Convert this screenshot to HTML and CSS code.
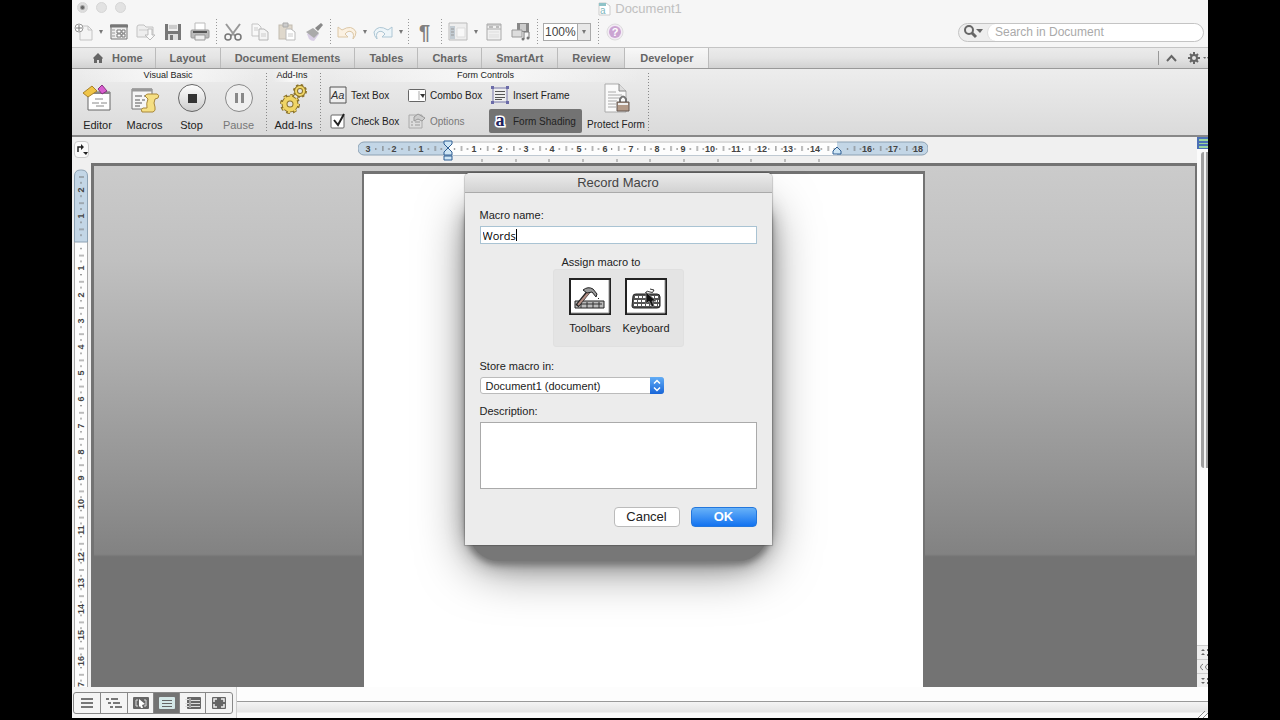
FILE: index.html
```html
<!DOCTYPE html>
<html lang="en">
<head>
    <meta charset="UTF-8">
    <meta name="viewport" content="width=device-width, initial-scale=1.0">
    <title>Document1</title>
    <link rel="stylesheet" href="styles.css">
</head>
<body>
<div class="window">
    <header class="titlebar">
        <div class="lights"><span class="light edited"></span><span class="light"></span><span class="light"></span></div>
        <h1 class="doc-title">
            <svg width="13" height="14" viewBox="0 0 13 14"><path d="M1 1h7l4 3v9H1z" fill="#fff" stroke="#ccc"/><path d="M1 1h7v3H1z" fill="#8fc3c8"/><text x="2" y="12" font-size="10" fill="#7fb6bd">a</text></svg>
            Document1
        </h1>
    </header>

    <!-- Standard toolbar -->
    <div class="toolbar">
        <button class="tool" aria-label="New"><svg width="20" height="20" viewBox="0 0 20 20"><path d="M6 4h8l4 4v10H6z" fill="#f4f4f4" stroke="#c4c4c4"/><path d="M14 4v4h4" fill="none" stroke="#c4c4c4"/><circle cx="5" cy="6" r="4" fill="#fff" stroke="#999"/><path d="M5 3v6M2 6h6" stroke="#777"/></svg></button>
        <button class="caret" aria-label="New options"></button>
        <button class="tool" aria-label="Gallery"><svg width="20" height="20" viewBox="0 0 20 20"><path d="M2 3h16v14H2z" fill="#eee" stroke="#777"/><path d="M1 4h18" stroke="#777" stroke-width="3"/><path d="M3 8h3M3 11h3M3 14h3" stroke="#999"/><path d="M8 8h4v3H8zM8 12h4v3H8zM13 8h3v3h-3zM13 12h3v3h-3z" fill="#fff" stroke="#777"/></svg></button>
        <button class="tool" aria-label="Open"><svg width="20" height="20" viewBox="0 0 20 20"><path d="M1 5q0-2 2-2h5l2 2h7v10H1z" fill="#eee" stroke="#c2c2c2"/><path d="M3 8h14" stroke="#ccc"/><path d="M12 7h4v6h3l-5 5-5-5h3z" fill="#fafafa" stroke="#bbb"/></svg></button>
        <button class="tool" aria-label="Save"><svg width="20" height="20" viewBox="0 0 20 20"><path d="M2 2h16v16H2z" fill="#777"/><path d="M5 2h10v7H5z" fill="#eee"/><path d="M6 4h8M6 6h8" stroke="#aaa"/><path d="M5 12h10v6H5z" fill="#ddd"/><path d="M7 13h3v5H7z" fill="#777"/></svg></button>
        <button class="tool" aria-label="Print"><svg width="20" height="20" viewBox="0 0 20 20"><path d="M5 1h10v8H5z" fill="#fff" stroke="#bbb"/><rect x="1" y="8" width="18" height="8" rx="1" fill="#bbb" stroke="#999"/><path d="M3 10h14" stroke="#555" stroke-width="2"/><path d="M5 13h10v5H5z" fill="#eee" stroke="#999"/></svg></button>
        <span class="sep"></span>
        <button class="tool" aria-label="Cut"><svg width="20" height="20" viewBox="0 0 20 20"><path d="M3 2l9 12M17 2L8 14" stroke="#999" stroke-width="2"/><circle cx="5" cy="15" r="3" fill="none" stroke="#777" stroke-width="1.5"/><circle cx="15" cy="15" r="3" fill="none" stroke="#777" stroke-width="1.5"/></svg></button>
        <button class="tool" aria-label="Copy"><svg width="20" height="20" viewBox="0 0 20 20"><path d="M2 2h6l3 3v9H2z" fill="#f8f8f8" stroke="#c4c4c4"/><path d="M9 7h5l4 3v8H9z" fill="#f4f4f4" stroke="#b5b5b5"/><path d="M4 6h4M4 8h4M11 12h5M11 14h5" stroke="#ccc"/></svg></button>
        <button class="tool" aria-label="Paste"><svg width="20" height="20" viewBox="0 0 20 20"><rect x="2" y="3" width="13" height="14" fill="#dfd8cc" stroke="#c2bbb0"/><path d="M6 1h5v4H6z" fill="#ccc" stroke="#aaa"/><path d="M9 7h5l4 3v8H9z" fill="#fff" stroke="#bbb"/><path d="M11 12h5M11 14h5" stroke="#ccc"/></svg></button>
        <button class="tool" aria-label="Format Painter"><svg width="20" height="20" viewBox="0 0 20 20"><path d="M3 12l7-5 5 5-5 7q-3 0-5-2z" fill="#d8cee4"/><path d="M2 10l7-4 6 5-5 5z" fill="#aaa"/><path d="M11 6l6-5 2 2-5 6z" fill="#888"/></svg></button>
        <span class="sep"></span>
        <button class="tool" aria-label="Undo"><svg width="20" height="20" viewBox="0 0 20 20"><path d="M1 5v10h10l-3-3q4-5 8-1 1 2 0 6 3-3 3-7-4-8-14-2z" fill="#fbf1e2" stroke="#dcc7a6"/></svg></button>
        <button class="caret" aria-label="Undo history"></button>
        <button class="tool" aria-label="Redo"><svg width="20" height="20" viewBox="0 0 20 20"><path d="M19 5v10H9l3-3q-4-5-8-1-1 2 0 6-3-3-3-7 4-8 14-2z" fill="#edf5f9" stroke="#adc6d4"/></svg></button>
        <button class="caret" aria-label="Redo history"></button>
        <span class="sep"></span>
        <button class="tool pilcrow" aria-label="Show formatting">¶</button>
        <span class="sep"></span>
        <button class="tool" aria-label="Sidebar"><svg width="20" height="20" viewBox="0 0 20 20"><path d="M1 1h18v17H1z" fill="#eee" stroke="#bbb"/><path d="M2 4h5v13H2z" fill="#c3ccd3"/><path d="M3 7h3M3 10h3M3 13h3" stroke="#999"/><path d="M9 6h8v9H9z" fill="#f8f8f8" stroke="#ddd"/></svg></button>
        <button class="caret" aria-label="Sidebar options"></button>
        <button class="tool" aria-label="Toolbox"><svg width="20" height="20" viewBox="0 0 20 20"><path d="M3 2h14v16H3z" fill="#f0f0f0" stroke="#aaa"/><path d="M3 3h14M3 7h14" stroke="#aaa"/><path d="M5 5h4M12 5h3" stroke="#888"/><path d="M5 10h10M5 13h10M5 15h10" stroke="#ddd"/></svg></button>
        <button class="tool" aria-label="Media"><svg width="20" height="20" viewBox="0 0 20 20"><path d="M6 1h12v9H6z" fill="#888"/><path d="M9 2h6v7H9z" fill="#ccc"/><path d="M1 8h10v7H1z" fill="#ddd" stroke="#999"/><path d="M13 17v-7h5v6" fill="none" stroke="#777"/><circle cx="12" cy="17" r="1.5" fill="#777"/><circle cx="17" cy="16" r="1.5" fill="#777"/></svg></button>
        <span class="sep"></span>
        <div class="zoom"><input type="text" value="100%" aria-label="Zoom"><button class="caret" aria-label="Zoom levels"></button></div>
        <span class="sep"></span>
        <button class="tool" aria-label="Help"><svg width="20" height="20" viewBox="0 0 20 20"><circle cx="10" cy="10" r="8" fill="#f3eaf5" stroke="#ddd"/><circle cx="10" cy="10" r="6" fill="#cba4d2"/><text x="10" y="14" font-size="11" font-weight="bold" text-anchor="middle" fill="#fff">?</text></svg></button>
        <div class="search">
            <button class="search-menu" aria-label="Search options"><svg width="20" height="14" viewBox="0 0 20 14"><circle cx="6" cy="5" r="4" fill="none" stroke="#666" stroke-width="2"/><path d="M9 8l4 4" stroke="#666" stroke-width="3"/><path d="M13 4h7l-3 4z" fill="#666"/></svg></button>
            <input type="search" placeholder="Search in Document" aria-label="Search in Document">
        </div>
    </div>

    <nav class="tabs">
        <a href="#home"><svg width="10" height="10" viewBox="0 0 10 10"><path d="M5 0l5 5-1 1v4H6V7H4v3H1V6L0 5z" fill="#666"/></svg>Home</a>
        <a href="#layout">Layout</a>
        <a href="#elements">Document Elements</a>
        <a href="#tables">Tables</a>
        <a href="#charts">Charts</a>
        <a href="#smartart">SmartArt</a>
        <a href="#review">Review</a>
        <a href="#developer" class="active">Developer</a>
        <div class="tab-tools">
            <button aria-label="Collapse ribbon"><svg width="11" height="8" viewBox="0 0 11 8"><path d="M1 7l4.5-5L10 7" fill="none" stroke="#666" stroke-width="2"/></svg></button>
            <button aria-label="Ribbon preferences"><svg width="20" height="12" viewBox="0 0 20 12"><circle cx="6" cy="6" r="3" fill="none" stroke="#666" stroke-width="2"/><path d="M6 0v3M6 9v3M0 6h3M9 6h3M2 2l2 2M8 8l2 2M10 2L8 4M4 8l-2 2" stroke="#666" stroke-width="2"/><path d="M15 5h3l-1 2zM19 5h1v2z" fill="#666"/></svg></button>
        </div>
    </nav>

    <!-- Developer ribbon -->
    <div class="ribbon">
        <section class="group visual-basic">
            <h2>Visual Basic</h2>
            <div class="big-buttons">
                <button class="big"><svg width="32" height="32" viewBox="0 0 32 32"><path d="M6 9h22v18H6z" fill="#fff" stroke="#666"/><path d="M6 10h22" stroke="#888" stroke-width="2"/><path d="M13 16h8M10 20h7M19 20h6M14 23h8" stroke="#888"/><path d="M1 10l9-7 5 5-9 6z" fill="#f0c548" stroke="#a8812a"/><path d="M16 6l4-4 5 6-5 3z" fill="#d95fd0" stroke="#86327f"/></svg>Editor</button>
                <button class="big"><svg width="32" height="32" viewBox="0 0 32 32"><path d="M3 6h20v20H3z" fill="#f6f6f6" stroke="#777"/><path d="M3 7h20" stroke="#999" stroke-width="3"/><path d="M6 13h7M15 13h4M6 17h5M13 17h3M6 20h7M6 23h5" stroke="#555"/><path d="M16 13q1-2 3-2h9q3 1 1 4l-3 1q-2 4 0 8 1 4-2 5H13q-2-3 1-4h4q-1-5 1-9z" fill="#f5df83" stroke="#a8873a"/></svg>Macros</button>
                <button class="big"><svg width="32" height="32" viewBox="0 0 32 32"><circle cx="16" cy="15" r="13.5" fill="url(#knob)" stroke="#666"/><path d="M12 11h9v9h-9z" fill="#333"/></svg>Stop</button>
                <button class="big dim"><svg width="32" height="32" viewBox="0 0 32 32"><circle cx="16" cy="15" r="13.5" fill="#efefef" stroke="#888"/><path d="M12 10h3v10h-3zM18 10h3v10h-3z" fill="#888"/></svg>Pause</button>
            </div>
        </section>
        <section class="group add-ins">
            <h2>Add-Ins</h2>
            <div class="big-buttons">
                <button class="big"><svg width="32" height="32" viewBox="0 0 32 32"><g fill="none"><circle cx="12" cy="21" r="7" stroke="#8b732b" stroke-width="6" stroke-dasharray="3 2.500"/><circle cx="12" cy="21" r="5.500" stroke="#8b732b" stroke-width="6"/><circle cx="12" cy="21" r="5.500" stroke="#f0d566" stroke-width="4"/><circle cx="12" cy="21" r="8" stroke="#f0d566" stroke-width="2" stroke-dasharray="2 4.280"/><circle cx="22" cy="8" r="5" stroke="#8b732b" stroke-width="4" stroke-dasharray="2 1.930"/><circle cx="22" cy="8" r="4" stroke="#8b732b" stroke-width="4"/><circle cx="22" cy="8" r="4" stroke="#f0d566" stroke-width="2"/></g></svg>Add-Ins</button>
            </div>
        </section>
        <section class="group form-controls">
            <h2>Form Controls</h2>
            <div class="controls">
                <button class="small"><svg width="18" height="18" viewBox="0 0 18 18"><path d="M1 1h16v16H1z" fill="#eee" stroke="#555"/><text x="2" y="13" font-size="11" font-style="italic" fill="#333">Aa</text></svg>Text Box</button>
                <button class="small"><svg width="18" height="18" viewBox="0 0 18 18"><rect x="0.5" y="3.500" width="17" height="12" rx="1" fill="#fff" stroke="#666"/><path d="M11 5v9" stroke="#aaa"/><path d="M12 8h5l-2 4z" fill="#333"/></svg>Combo Box</button>
                <button class="small"><svg width="18" height="18" viewBox="0 0 18 18"><path d="M2 2h14v14H2z" fill="#eee" stroke="#77a"/><path d="M4 5.500h10M4 8.500h10M4 11.500h10M4 13.500h7" stroke="#555"/><path d="M0 0h3v3H0zM15 0h3v3h-3zM0 15h3v3H0zM15 15h3v3h-3z" fill="#6b6ba8"/></svg>Insert Frame</button>
                <button class="small"><svg width="18" height="18" viewBox="0 0 18 18"><rect x="2" y="3" width="13" height="13" rx="1" fill="#fff" stroke="#666"/><path d="M5 8l4 5 6-11" fill="none" stroke="#222" stroke-width="2"/></svg>Check Box</button>
                <button class="small dim"><svg width="18" height="18" viewBox="0 0 18 18"><path d="M1 3h13v13H1z" fill="#ddd" stroke="#aaa"/><path d="M3 10h2M3 13h2M7 10h5M7 13h5" stroke="#999"/><path d="M6 5l4-3 7 4-3 3-4-2-4 2z" fill="#ccc" stroke="#999"/></svg>Options</button>
                <button class="small pressed"><svg width="18" height="18" viewBox="0 0 18 18"><text class="shade-letter" x="9" y="14">a</text></svg>Form Shading</button>
            </div>
            <button class="big protect"><svg width="32" height="32" viewBox="0 0 32 32"><path d="M5 1h14l7 7v21H5z" fill="#fafafa" stroke="#aaa"/><path d="M19 1v7h7" fill="#ddd" stroke="#888"/><path d="M8 9h8M8 12h14M8 15h14M8 18h9M8 21h8M8 24h8" stroke="#aaa"/><path d="M20 20v-4q3-5 6 0v4" fill="none" stroke="#777" stroke-width="2"/><path d="M17 19h12v9H17z" fill="#b39a88" stroke="#625750"/><path d="M18 21h10" stroke="#eee" stroke-width="2"/></svg>Protect Form</button>
        </section>
    </div>

    <div class="main">
        <div class="ruler-row">
            <button class="tab-stop" aria-label="Tab stop"><svg width="13" height="13" viewBox="0 0 13 13"><path d="M3 9V4h4" fill="none" stroke="#222" stroke-width="1.500"/><path d="M6 1l3 3-3 3zM8 9h5l-2 3z" fill="#222"/></svg></button>
            <div class="ruler-track">
                <svg width="570" height="26" viewBox="0 0 570 26">
                    <defs>
                        <linearGradient id="knob" x2="0" y2="1"><stop stop-color="#fff"/><stop offset="1" stop-color="#ccc"/></linearGradient>
                        <pattern id="cm" x="90" y="0" width="26.2" height="26" patternUnits="userSpaceOnUse"><path d="M6 11h1v2H6zM13 9h1v5h-1zM19 11h1v2h-1z" fill="#777"/></pattern>
                    </defs>
                    <rect y="5" width="570" height="13" rx="6" fill="#c3d6e6" stroke="#8da2b4"/>
                    <path d="M90 4h389v14H90z" fill="#fdfdfd"/>
                    <path d="M90 5h389" stroke="#bbb"/>
                    <path d="M16 5h540v13H16z" fill="url(#cm)"/>
                    <g class="ruler-text">
                        <text x="10" y="15">3</text><text x="36" y="15">2</text><text x="63" y="15">1</text>
                        <text x="116" y="15">1</text><text x="142" y="15">2</text><text x="168" y="15">3</text><text x="194" y="15">4</text><text x="221" y="15">5</text><text x="247" y="15">6</text><text x="273" y="15">7</text><text x="299" y="15">8</text><text x="325" y="15">9</text><text x="352" y="15">10</text><text x="378" y="15">11</text><text x="404" y="15">12</text><text x="430" y="15">13</text><text x="457" y="15">14</text>
                        <text x="509" y="15">16</text><text x="535" y="15">17</text><text x="560" y="15">18</text>
                    </g>
                    <path d="M124 22v3M158 22v3M191 22v3M225 22v3M259 22v3M292 22v3M326 22v3M360 22v3M393 22v3M427 22v3M461 22v3" stroke="#888"/>
                    <path d="M86 4h8v3l-4 4 4 4v3h-8v-3l4-4-4-4zM86 19h8v4h-8z" fill="#cfe6f5" stroke="#2f5f94"/>
                    <path d="M475 17v-3l4-4 4 4v3z" fill="#cfe6f5" stroke="#2f5f94"/>
                </svg>
            </div>
        </div>

        <div class="side-ruler">
            <svg width="14" height="520" viewBox="0 0 14 520">
                <defs><pattern id="cmv" x="0" y="73" width="14" height="26.2" patternUnits="userSpaceOnUse"><path d="M6 6h2v1H6zM5 13h5v1H5zM6 19h2v1H6z" fill="#777"/></pattern></defs>
                <path d="M0 73h14v447H0z" fill="#fdfdfd"/>
                <path d="M0.500 73V7q0-6 6-6h1q6 0 6 6v66z" fill="#c3d6e6" stroke="#8da2b4"/>
                <path d="M0.500 73v447M13.500 73v447" stroke="#aaa"/>
                <path d="M0 6h14v514H0z" fill="url(#cmv)"/>
                <g class="ruler-text">
                    <text transform="translate(10 21) rotate(-90)">2</text><text transform="translate(10 47) rotate(-90)">1</text>
                    <text transform="translate(10 99) rotate(-90)">1</text><text transform="translate(10 126) rotate(-90)">2</text><text transform="translate(10 152) rotate(-90)">3</text><text transform="translate(10 178) rotate(-90)">4</text><text transform="translate(10 204) rotate(-90)">5</text><text transform="translate(10 230) rotate(-90)">6</text><text transform="translate(10 257) rotate(-90)">7</text><text transform="translate(10 283) rotate(-90)">8</text><text transform="translate(10 309) rotate(-90)">9</text><text transform="translate(10 335) rotate(-90)">10</text><text transform="translate(10 361) rotate(-90)">11</text><text transform="translate(10 388) rotate(-90)">12</text><text transform="translate(10 414) rotate(-90)">13</text><text transform="translate(10 440) rotate(-90)">14</text><text transform="translate(10 466) rotate(-90)">15</text><text transform="translate(10 492) rotate(-90)">16</text><text transform="translate(10 518) rotate(-90)">17</text>
                </g>
            </svg>
        </div>

        <main class="workspace">
            <div class="page"></div>

            <div class="dialog" role="dialog" aria-labelledby="dialog-title">
                <form class="dialog-panel">
                    <h2 id="dialog-title">Record Macro</h2>
                    <div class="dialog-body">
                        <label for="macro-name">Macro name:</label>
                        <div class="name-field"><input type="text" id="macro-name" value="Words"></div>
                        <div class="assign" role="group" aria-labelledby="assign-label">
                            <span id="assign-label">Assign macro to</span>
                            <div class="assign-box">
                                <button type="button" class="assign-btn">
                                    <svg width="42" height="37" viewBox="0 0 42 37"><path d="M1 1h40v35H1z" fill="#fff" stroke="#222" stroke-width="2"/><path d="M2 35h38M40 2v33" stroke="#999"/><path d="M6 23h29v7H6z" fill="#bbb" stroke="#222"/><path d="M8 26h25M12 24v6M18 24v6M24 24v6M30 24v6" stroke="#333"/><path d="M8 28L20 13" stroke="#222" stroke-width="4"/><path d="M9 27L20 14" stroke="#b58f85" stroke-width="2"/><path d="M14 12q5-4 10-1l4 5-1 3-4-5-5 1z" fill="#999" stroke="#222"/><path d="M29 20l1 1" stroke="#222"/></svg>
                                    Toolbars
                                </button>
                                <button type="button" class="assign-btn">
                                    <svg width="42" height="37" viewBox="0 0 42 37"><path d="M1 1h40v35H1z" fill="#fff" stroke="#222" stroke-width="2"/><path d="M2 35h38M40 2v33" stroke="#999"/><path d="M8 18q0-2 3-2h21q3 0 3 3v9q0 2-3 2H9q-2 0-2-2z" fill="#555" stroke="#222"/><path d="M10 19h24M9 23h25M9 27h25" stroke="#fff" stroke-width="2" stroke-dasharray="3 1"/><path d="M20 15q2-3 5-1t4-2l-4-1" fill="none" stroke="#333"/></svg>
                                    Keyboard
                                    <svg class="pointer" width="12" height="18" viewBox="0 0 12 18"><path d="M1 1v12l3-3 3 6 2-1-2-5h4z" fill="#111" stroke="#777"/></svg>
                                </button>
                            </div>
                        </div>
                        <label for="store">Store macro in:</label>
                        <div class="select-wrap">
                            <select id="store"><option>Document1 (document)</option></select>
                            <svg width="14" height="16" viewBox="0 0 14 16"><path d="M4 6l3-3 3 3M4 10l3 3 3-3" fill="none" stroke="#fff" stroke-width="1.5"/></svg>
                        </div>
                        <label for="description">Description:</label>
                        <textarea id="description"></textarea>
                        <div class="actions">
                            <button type="button" class="btn">Cancel</button>
                            <button type="button" class="btn primary">OK</button>
                        </div>
                    </div>
                </form>
            </div>
        </main>

        <aside class="scroll">
            <svg width="11" height="13" viewBox="0 0 11 13"><path d="M0 0h11v12H0z" fill="#4a6fb5"/><path d="M2 2h9v2H2zM2 6h9v1H2zM2 9h9v2H2z" fill="#9ad69a"/></svg>
            <div class="thumb"></div>
            <div class="browse">
                <button aria-label="Previous"><svg width="9" height="8" viewBox="0 0 9 8"><path d="M2 2l2-2 2 2zM2 6l2-2 2 2zM8 0h1v2H8zM8 5h1v2H8z" fill="#666"/></svg></button>
                <button aria-label="Browse object"><svg width="9" height="8" viewBox="0 0 9 8"><path d="M4 1Q-1 4 4 7M9 1Q4 4 9 7" fill="none" stroke="#777"/></svg></button>
                <button aria-label="Next"><svg width="9" height="8" viewBox="0 0 9 8"><path d="M2 1h4L4 3zM2 5h4L4 7zM8 1h1v2H8zM8 5h1v2H8z" fill="#666"/></svg></button>
            </div>
        </aside>
    </div>

    <footer class="statusbar">
        <div class="views">
            <button aria-label="Draft"><svg width="16" height="14" viewBox="0 0 16 14"><path d="M2 3h12M2 7h12M2 11h12" stroke="#777" stroke-width="2"/></svg></button>
            <button aria-label="Outline"><svg width="16" height="14" viewBox="0 0 16 14"><path d="M0 3h3M5 3h7M2 7h3M7 7h7M4 11h3M9 11h7" stroke="#777" stroke-width="2"/></svg></button>
            <button aria-label="Publishing"><svg width="16" height="14" viewBox="0 0 16 14"><rect y="1" width="16" height="12" rx="1" fill="#666"/><path d="M5 4H3v6h2M11 4h2v6h-2" fill="none" stroke="#ddd"/><path d="M6 3l6 5-3 1 1 3-2 0-1-2-1 1z" fill="#fff"/></svg></button>
            <button class="on" aria-label="Print layout"><svg width="16" height="14" viewBox="0 0 16 14"><rect y="1" width="16" height="12" rx="1" fill="#d5e8e8"/><path d="M3 4.500h10M3 7.500h10M3 10.500h10" stroke="#666"/></svg></button>
            <button aria-label="Notebook"><svg width="16" height="14" viewBox="0 0 16 14"><rect x="2" y="1" width="14" height="12" rx="1" fill="#666"/><path d="M0 3.500h4M0 7.500h4M0 10.500h4M6 4.500h9M6 7.500h9M6 10.500h9M5 2v10" stroke="#ddd"/></svg></button>
            <button aria-label="Full screen"><svg width="16" height="14" viewBox="0 0 16 14"><rect x="1" y="1" width="14" height="12" rx="1" fill="#666"/><path d="M3 6V3h3M10 3h3v3M13 8v3h-3M6 11H3V8" fill="none" stroke="#eee" stroke-width="1.500"/></svg></button>
        </div>
        <div class="status-info"><svg width="10" height="8" viewBox="0 0 10 8"><path d="M0 8l7-7M5 8l5-5" stroke="#888"/></svg></div>
    </footer>
</div>
</body>
</html>
```
FILE: styles.css
```css
:root {
    --ink: #222;
    --muted: #666;
    --line: #999;
    --desk: #737373;
    --panel: #ececec;
}

* {
    box-sizing: border-box;
}

body {
    margin: 0;
    padding: 0 72px 2px;
    height: 100vh;
    background: #000;
    color: var(--ink);
    font-family: "Liberation Sans", Arial, sans-serif;
    font-size: 11px;
    overflow: hidden;
}

h1, h2 {
    margin: 0;
    font-weight: normal;
}

svg {
    display: block;
    flex-shrink: 0;
}

button {
    font: inherit;
    color: inherit;
    padding: 0;
    border: 0;
    background: none;
}

.window {
    display: flex;
    flex-direction: column;
    height: 100%;
    background: #f6f6f6;
    overflow: hidden;
}

/* title bar */
.titlebar {
    position: relative;
    display: flex;
    justify-content: center;
    height: 17px;
}

.lights {
    position: absolute;
    left: 5px;
    top: 2px;
    display: flex;
    gap: 8px;
}

.light {
    width: 11px;
    height: 11px;
    border-radius: 50%;
    background: #e2e2e2;
    border: 1px solid #d6d6d6;
}

.light.edited {
    background: radial-gradient(#666 1px, #ddd 3px);
}

.doc-title {
    display: flex;
    align-items: center;
    gap: 4px;
    font-size: 13px;
    line-height: 16px;
    color: #c0c0c0;
}

/* toolbar */
.toolbar {
    display: flex;
    align-items: center;
    height: 30px;
    padding-right: 4px;
}

.tool {
    display: flex;
    align-items: center;
    justify-content: center;
    width: 27px;
}

.tool:first-child {
    width: 24px;
}

.pilcrow {
    color: #808080;
    font-size: 20px;
    font-weight: bold;
    line-height: 20px;
}

.caret {
    width: 9px;
    height: 20px;
    display: flex;
    align-items: center;
    justify-content: center;
}

.caret::after {
    content: "";
    border: 2px solid transparent;
    border-top: 4px solid #777;
    border-bottom: 0;
}

.sep {
    width: 6px;
    height: 26px;
    background: repeating-linear-gradient(#999 0 1px, transparent 1px 3px) 3px 0 / 1px 100% no-repeat;
}

.zoom {
    display: flex;
    align-items: center;
    margin: 0 4px 0 3px;
    height: 18px;
    border: 1px solid #aaa;
    background: #e8e8e8;
}

.zoom input {
    width: 34px;
    height: 16px;
    padding: 0 1px;
    border: 0;
    border-right: 1px solid #aaa;
    background: #fff;
    font: 12px "Liberation Sans", Arial, sans-serif;
    color: #444;
}

.zoom .caret {
    width: 12px;
    height: 16px;
}

.search {
    display: flex;
    align-items: center;
    width: 246px;
    height: 19px;
    margin-left: auto;
    border: 1px solid #c4c4c4;
    border-radius: 10px;
    background: #eee;
    overflow: hidden;
}

.search-menu {
    padding: 0 4px;
}

.search input {
    flex: 1;
    min-width: 0;
    height: 17px;
    padding: 0 7px;
    border: 0;
    border-left: 1px solid #ddd;
    border-radius: 9px;
    background: #fff;
    font: 12px "Liberation Sans", Arial, sans-serif;
}

.search input::placeholder {
    color: #aaa;
}

/* ribbon tabs */
.tabs {
    display: flex;
    height: 22px;
    border-top: 1px solid #c4c4c4;
    border-bottom: 1px solid var(--line);
    background: linear-gradient(#ebebeb, #e4e4e4 50%, #d2d2d2);
}

.tabs a {
    display: flex;
    align-items: center;
    gap: 9px;
    padding: 0 14px;
    border-right: 1px solid #bbb;
    color: var(--muted);
    font-weight: bold;
    text-decoration: none;
}

.tabs a:first-child {
    padding-left: 21px;
    padding-right: 12px;
}

.tabs a.active {
    padding: 0 15px;
    background: linear-gradient(#f8f8f8, #e8e8e8);
}

.tab-tools {
    display: flex;
    align-items: center;
    gap: 11px;
    margin: 3px 0 3px auto;
    padding-left: 7px;
    border-left: 1px solid var(--line);
}

/* ribbon */
.ribbon {
    display: flex;
    height: 68px;
    border-bottom: 2px solid #888;
    background: linear-gradient(#ededed, #dadada);
}

.group {
    display: flex;
    flex-direction: column;
    background: repeating-linear-gradient(#888 0 1px, transparent 1px 3px) right 1px top 4px / 1px 60px no-repeat;
}

.group h2 {
    margin: 0 8px;
    font-size: 9px;
    line-height: 13px;
    text-align: center;
    background: linear-gradient(90deg, transparent, #f8f8f8, transparent);
}

.visual-basic {
    width: 196px;
}

.visual-basic h2 {
    margin-right: 12px;
}

.add-ins {
    width: 54px;
}

.add-ins h2 {
    margin: 0 10px 0 4px;
}

.big-buttons {
    display: flex;
    padding: 0 2px;
}

.big {
    display: flex;
    flex-direction: column;
    align-items: center;
    width: 47px;
    padding-top: 1px;
    line-height: 20px;
    white-space: nowrap;
}

.dim {
    color: #777;
}

.form-controls {
    display: grid;
    grid-template-columns: 261px 66px;
    grid-template-rows: 13px 1fr;
    font-size: 10px;
    padding-right: 1px;
}

.form-controls h2 {
    grid-column: 1 / 3;
}

.controls {
    display: grid;
    grid-template-columns: 79px 81px 93px;
    grid-template-rows: 26px 26px;
    align-items: center;
    padding-left: 7px;
}

.small {
    display: flex;
    align-items: center;
    gap: 4px;
    height: 24px;
    white-space: nowrap;
}

.controls .small:nth-child(3n) {
    padding-left: 2px;
}

.pressed {
    border-radius: 2px;
    background: #737373;
}

.shade-letter {
    font: bold 18px "Liberation Serif", serif;
    text-anchor: middle;
    fill: #22225c;
    stroke: #fff;
    stroke-width: 3px;
    paint-order: stroke;
}

.protect {
    width: 66px;
}

/* rulers and document */
.main {
    flex: 1;
    min-height: 0;
    display: grid;
    grid-template-columns: 19px 1fr 11px;
    grid-template-rows: 26px minmax(0, 1fr);
    background: #f0f0f0;
}

.ruler-row {
    grid-column: 1 / 3;
    display: flex;
}

.tab-stop {
    display: flex;
    align-items: center;
    justify-content: center;
    width: 15px;
    height: 17px;
    margin: 4px 2px;
    border: 1px solid #ccc;
    border-radius: 4px;
    background: #fafafa;
}

.ruler-track {
    flex: 1;
    display: flex;
    justify-content: center;
    padding-right: 2px;
}

.ruler-text {
    font-size: 9px;
    font-weight: bold;
    fill: #444;
    text-anchor: middle;
}

.side-ruler {
    grid-column: 1;
    padding: 6px 0 0 2px;
    overflow: hidden;
}

.workspace {
    grid-column: 2;
    position: relative;
    display: flex;
    justify-content: center;
    padding-right: 2px;
    border: 3px solid var(--desk);
    border-width: 3px 2px 0 3px;
    background: linear-gradient(#cbcbcb, #c0c0c0 18%, #a9a9a9 40%, #939393 60%, #828282 74.5%, var(--desk) 75%);
    overflow: hidden;
}

.page {
    width: 563px;
    margin-top: 5px;
    border: 2px solid var(--desk);
    border-top-width: 3px;
    border-bottom: 0;
    background: #fff;
}

.scroll {
    grid-column: 3;
    grid-row: 1 / 3;
    display: flex;
    flex-direction: column;
    background: #fbfbfb;
}

.thumb {
    width: 7px;
    height: 316px;
    margin: 2px 0 0 4px;
    border: 1px solid #aaa;
    border-width: 0 2px 0 3px;
    border-color: #a0a0a0;
    border-radius: 3px 0 0 3px;
    background: #f4f4f4;
}

.browse {
    margin-top: auto;
}

.browse button {
    display: flex;
    align-items: center;
    width: 100%;
    height: 14px;
    padding-left: 2px;
    border-top: 1px solid #ccc;
    background: #eee;
}

/* record macro dialog */
.dialog {
    position: absolute;
    top: 7px;
    left: calc(50% - 180px);
    width: 307px;
    z-index: 1;
}

.dialog::before {
    content: "";
    position: absolute;
    top: 30px;
    right: 4px;
    bottom: -16px;
    left: 4px;
    z-index: -1;
    border-radius: 20px 20px 30px 30px;
    background: #777;
    box-shadow: 0 0 6px 3px #777, 0 0 22px rgba(0, 0, 0, 0.4), 0 6px 50px rgba(0, 0, 0, 0.5);
}

.dialog-panel {
    border-radius: 5px 5px 0 0;
    background: var(--panel);
    box-shadow: 0 0 1px 1px rgba(0, 0, 0, 0.2);
}

.dialog-panel h2 {
    height: 20px;
    border-bottom: 1px solid #aaa;
    border-radius: 5px 5px 0 0;
    background: linear-gradient(#ebebeb, #d2d2d2);
    color: #444;
    font-size: 13px;
    line-height: 20px;
    text-align: center;
}

.dialog-body {
    display: flex;
    flex-direction: column;
    padding: 15px 15px 18px;
}

.dialog-body label {
    align-self: flex-start;
    line-height: 14px;
    margin-bottom: 4px;
}

.name-field {
    position: relative;
    display: flex;
}

/* text caret */
.name-field::after {
    content: "";
    position: absolute;
    top: 3px;
    left: 36px;
    width: 1px;
    height: 12px;
    background: #000;
}

#macro-name {
    flex: 1;
    height: 18px;
    padding: 0 2px;
    border: 1px solid #a9c3d3;
    outline: 0;
    background: #fff;
    color: #000;
    font: 11px "Open Sans", sans-serif;
}

.assign {
    align-self: center;
    width: 131px;
    margin: 11px 0 12px;
}

.assign span {
    display: block;
    padding-left: 9px;
    line-height: 14px;
}

.assign-box {
    display: flex;
    justify-content: center;
    gap: 14px;
    height: 78px;
    padding-top: 8px;
    border: 1px solid #e0e0e0;
    border-radius: 3px;
    background: #e4e4e4;
}

.assign-btn {
    position: relative;
    display: flex;
    flex-direction: column;
    align-items: center;
    width: 42px;
    line-height: 26px;
}

.pointer {
    position: absolute;
    left: 20px;
    top: 13px;
}

.select-wrap {
    position: relative;
    width: 184px;
    margin-bottom: 10px;
}

.select-wrap select {
    display: block;
    appearance: none;
    width: 100%;
    height: 17px;
    padding: 0 5px;
    border: 1px solid #bbb;
    border-radius: 3px;
    background: #fff;
    color: var(--ink);
    font: 11px "Liberation Sans", Arial, sans-serif;
}

.select-wrap svg {
    position: absolute;
    right: 0;
    top: 0;
    height: 17px;
    border-radius: 0 3px 3px 0;
    background: linear-gradient(#62adf6, #1865d8);
    pointer-events: none;
}

#description {
    height: 67px;
    border: 1px solid #aaa;
    background: #fff;
    resize: none;
}

.actions {
    display: flex;
    justify-content: flex-end;
    gap: 11px;
    margin-top: 18px;
}

.btn {
    width: 66px;
    height: 20px;
    border: 1px solid #bbb;
    border-radius: 4px;
    background: #fff;
    font-size: 13px;
    line-height: 18px;
}

.btn.primary {
    border-color: #2377dd;
    background: linear-gradient(#68b2f8, #1272f0);
    color: #fff;
    font-weight: bold;
}

/* status bar */
.statusbar {
    display: flex;
    height: 31px;
    background: #f4f4f4;
}

.views {
    display: flex;
    height: 22px;
    margin: 5px 3px 0 1px;
    border: 1px solid #888;
    border-radius: 3px;
}

.views button {
    display: flex;
    align-items: center;
    justify-content: center;
    width: 27px;
    border-right: 1px solid #888;
}

.views button:nth-child(n+3) {
    width: 26px;
}

.views button:last-child {
    border-right: 0;
}

.views .on {
    background: #737373;
}

.status-info {
    flex: 1;
    display: flex;
    align-items: flex-end;
    justify-content: flex-end;
    border-left: 1px solid #ccc;
    background: linear-gradient(#fdfdfd 14px, #999 14px, #999 15px, #f4f4f4 15px, #e4e4e4 25px, #fafafa 26px);
}
```
